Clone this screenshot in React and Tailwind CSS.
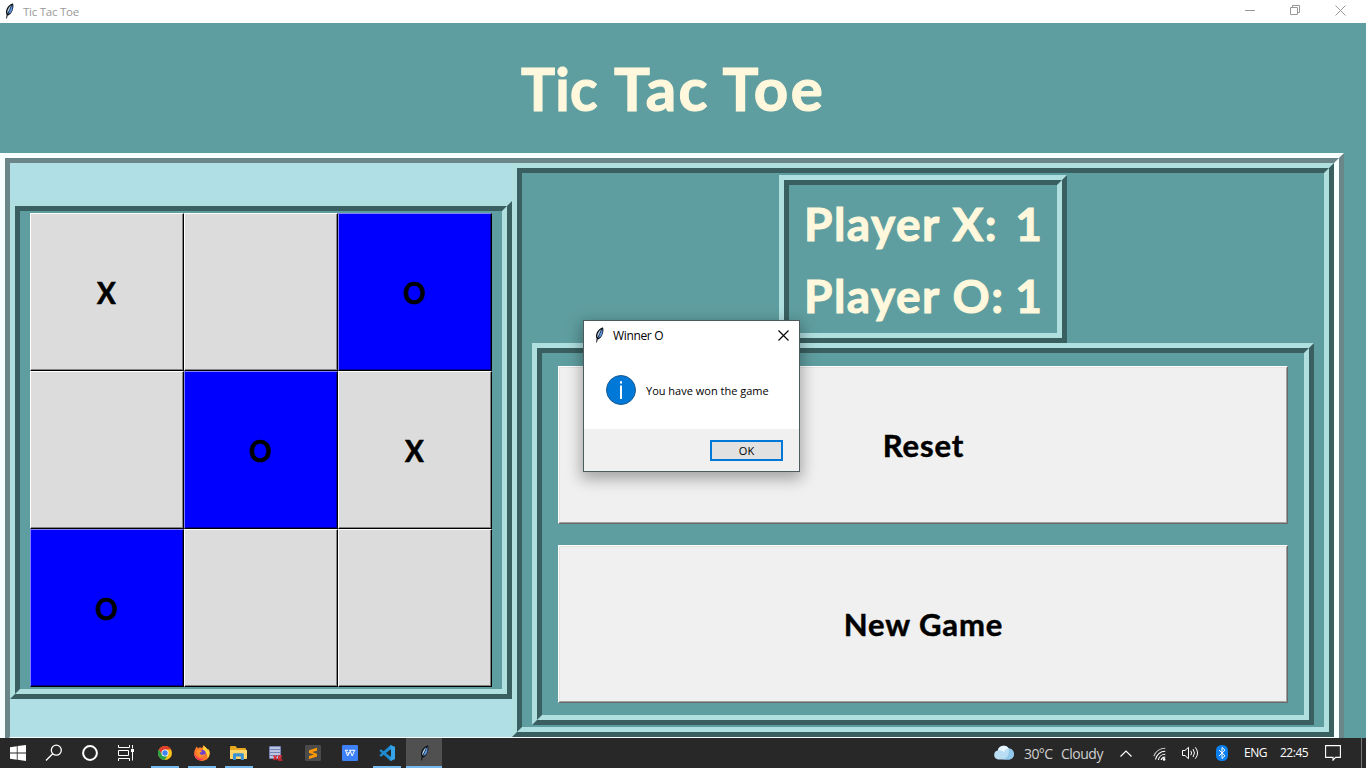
import React from "react";

const LIGHT = "border-t-[#b0dfe0] border-l-[#b0dfe0] border-b-[#3a5f60] border-r-[#3a5f60]";
const DARK = "border-b-[#b0dfe0] border-r-[#b0dfe0] border-t-[#3a5f60] border-l-[#3a5f60]";

function Ridge({ className = "", inner = "", children }) {
  return (
    <div className={`border-[5px] ${LIGHT} ${className}`}>
      <div className={`h-full border-[5px] bg-[#5f9ea0] ${DARK} ${inner}`}>{children}</div>
    </div>
  );
}

function Feather({ className }) {
  return (
    <svg viewBox="0 0 16 16" className={className}>
      <path d="M5.2 15.6 L5.6 11.5 C4.2 9 5.4 5.2 7.8 2.7 C9.2 1.2 11.5 0 12 .6 C12.9 2.7 12.4 6.6 10.7 9.2 C9.6 11 8 12.4 6.6 12.4 L6 15.6Z" fill="#0b0d12" />
      <path d="M6.4 10.6 C5.7 8.4 6.9 5.4 8.7 3.4 L10.2 2.2 L8.2 7.2Z" fill="#b5d2ec" />
      <path d="M7 11.2 L11.3 1.5 C12 5 11.2 7.8 9.9 9.4Z" fill="#5a94dc" />
    </svg>
  );
}

function Cell({ mark, won }) {
  return (
    <div className={`h-[158px] w-[154px] border ${won ? "border-t-[#7f7fff] border-l-[#7f7fff]" : "border-t-white border-l-white"} border-r-black border-b-black`}>
      <div className={`flex h-full items-center justify-center border-r border-b ${won ? "border-[#000099] bg-[#0000ff]" : "border-[#848484] bg-[#dcdcdc]"}`}>
        <span className="relative top-[1px] scale-x-[0.9] font-[Lato] text-[31px] leading-none font-bold text-black [-webkit-text-stroke:0.7px_#000]">{mark}</span>
      </div>
    </div>
  );
}

function BigButton({ children }) {
  return (
    <div className="h-[158px] border border-t-white border-l-white border-r-[#696969] border-b-[#696969]">
      <div className="flex h-full items-center justify-center border border-t-[#e3e3e3] border-l-[#e3e3e3] border-r-[#a0a0a0] border-b-[#a0a0a0] bg-[#f0f0f0] pl-px font-[Lato] text-[31px] font-bold tracking-[0.9px] text-black [-webkit-text-stroke:0.5px_#000]">
        {children}
      </div>
    </div>
  );
}

function Task({ className = "w-[37px]", running, active, children }) {
  return (
    <div className={`flex h-[30px] shrink-0 flex-col items-center ${active ? "bg-[#505050]" : ""} ${className}`}>
      <div className="flex h-7 items-center justify-center">{children}</div>
      {running && <div className={`h-[2px] bg-[#76b9ed] ${active ? "w-full" : "w-7"}`} />}
    </div>
  );
}

function Taskbar() {
  return (
    <div className="flex h-[30px] bg-[#282828] text-white">
      <Task className="w-9">
        <svg width="16" height="16" viewBox="0 0 16 16" className="relative top-px" fill="#fff"><path d="M0 2.2 6.8 1.2V7.5H0zM7.6 1.1 16 0v7.5H7.6zM0 8.4h6.8v6.3L0 13.8zM7.6 8.4H16V16l-8.4-1.2z" /></svg>
      </Task>
      <Task className="w-9">
        <svg width="18" height="18" viewBox="0 0 18 18" className="relative top-px" fill="none" stroke="#fff" strokeWidth="1.3"><circle cx="11.3" cy="6.2" r="5" /><path d="M7.7 9.8 1 16.5" /></svg>
      </Task>
      <Task className="w-9">
        <svg width="16" height="16" viewBox="0 0 16 16" className="relative top-px" fill="none" stroke="#fff" strokeWidth="2"><circle cx="8" cy="8" r="6.9" /></svg>
      </Task>
      <Task className="w-[38px]">
        <svg width="17" height="16" viewBox="0 0 17 16" className="relative -left-px top-[1px]" fill="none" stroke="#fff"><path d="M.5 0v2.5h11V0M.5 16v-2.5h11V16M.5 5.5h10v5H.5zM14.5 0v3.5M14.5 7v8.5" /><path d="M13 4h3v3h-3z" fill="#fff" stroke="none" /></svg>
      </Task>
      <Task running>
        <svg width="14" height="14" viewBox="0 0 14 14" className="relative top-px">
          <circle cx="7" cy="7" r="7" fill="#fbc116" />
          <path d="M.9 3.5A7 7 0 0 1 13.1 3.5H7L4 8.8Z" fill="#e33b2e" />
          <path d="M.9 3.5A7 7 0 0 0 6.6 14L10 8.8 4 8.8Z" fill="#26a148" />
          <circle cx="7" cy="7" r="3.5" fill="#fff" /><circle cx="7" cy="7" r="2.7" fill="#3f83ee" />
        </svg>
      </Task>
      <Task running>
        <svg width="16" height="16" viewBox="0 0 16 16" className="relative top-px">
          <path d="M1.5 3.5 2.6 1.5 4 3.2 6 2.3 8 3 9.8.2C10.5 2 13 3 14 5l.6-.8C16.4 7 16.2 11 13.5 13.8 10.5 16.7 5 16.6 2 13.5-.3 11-.5 7 1.5 3.5Z" fill="#ff7a28" />
          <path d="M9.8.2C10.5 2 13 3 14 5l.6-.8c1.5 3 1.3 6.5-1.1 9.4C14 9 11 6 9 4.2Z" fill="#ffd43c" />
          <path d="M.6 6C.3 12 5 14.5 10 13.4 7 16.8 2.4 15.2.8 11Z" fill="#f53863" />
          <circle cx="8.3" cy="8.2" r="3.3" fill="#6b42cf" />
          <path d="M3.2 5C5 4.2 7 5 8 6.5L5.5 8C6 10 9.5 10.5 11.4 8.5 11 12.5 5 13 3.5 9Z" fill="#ff9528" />
        </svg>
      </Task>
      <Task running>
        <svg width="17" height="14" viewBox="0 0 17 14" className="relative top-px">
          <path d="M0 1Q0 0 1 0H5.5L7 2H15Q16 2 16 3V13H0Z" fill="#e8a920" /><path d="M0 4H17V12Q17 13 16 13H0Z" fill="#ffd667" />
          <path d="M3 14V8.5Q3 7.2 4.3 7.2H12.5Q13.8 7.2 13.8 8.5V14H10.8V10.6H6V14Z" fill="#3a93d4" />
        </svg>
      </Task>
      <Task>
        <svg width="14" height="15" viewBox="0 0 14 15" className="relative top-px">
          <path d="M1 0H11Q12 0 12 1V12Q12 13 11 13H1Q0 13 0 12V1Q0 0 1 0Z" fill="#7683b5" />
          <path d="M1 2H11M1 5H11M1 8H11M1 11H11" stroke="#d4daf0" strokeWidth="1.5" />
          <path d="m4.5 9.5 3.5 4.5M8 9.5l-3.5 4.5M13 10H9.7v4H13.4M9.7 12H12.5" stroke="#e0252b" strokeWidth="1.3" fill="none" />
        </svg>
      </Task>
      <Task>
        <svg width="16" height="16" viewBox="0 0 16 16" className="relative top-px"><rect width="16" height="16" rx="1.2" fill="#4b4b4b" /><path d="M12 2.8V5.7L7.2 7.1 12 8.7V11.4L4 13.9V11L8.8 9.5 4 8V5.3Z" fill="#ff9800" /></svg>
      </Task>
      <Task>
        <svg width="16" height="16" viewBox="0 0 16 16" className="relative top-px"><rect width="16" height="16" rx="1.2" fill="#3e80f7" /><path d="M3 5.3H6.2M3.6 5.3 5.6 11 8.3 6.2 10.2 11 12.6 5.3M7 5.3H13.2M5.8 7 6.6 9" stroke="#fff" fill="none" /></svg>
      </Task>
      <Task running>
        <svg width="16" height="16" viewBox="0 0 16 16" className="relative top-px"><path d="m11.5 0 4.5 2v12l-4.5 2L.3 5.7 2 4.2 12 11.8V4.2L2 11.8.3 10.3Z" fill="#1e8ad0" /><path d="m11.5 0 4.5 2v12l-4.5 2Z" fill="#3aa9ee" opacity=".8" /><path d="M12 4.5v7L7.3 8Z" fill="#282828" /></svg>
      </Task>
      <Task active running className="ml-px w-9"><Feather className="relative top-px h-4 w-4" /></Task>

      <div className="ml-auto flex h-[30px] items-center">
        <svg width="22" height="16" viewBox="0 0 22 16" className="relative -top-px mr-[9px]"><path d="M5 15.5A4.6 4.6 0 0 1 4.7 6.5 6.2 6.2 0 0 1 16 4.5 5.6 5.6 0 0 1 16.5 15.5Z" fill="#b9def4" /><path d="M5 6.3A6 6 0 0 1 15.6 4.5Q12 5 11 8 8 5.7 5 6.3Z" fill="#e9f7ff" /><path d="M16 4.5A5.6 5.6 0 0 1 16.5 15.5H10Q17 13 16 4.5Z" fill="#91c7ea" /></svg>
        <span className="w-[37px] font-['Open_Sans'] text-[14px] tracking-[-0.6px] whitespace-nowrap text-[#d0d0d0]">30°C</span>
        <span className="w-[59px] font-['Open_Sans'] text-[14px] tracking-[-0.5px] text-[#d0d0d0]">Cloudy</span>
        <svg width="12" height="7" viewBox="0 0 12 7" fill="none" stroke="#fff" strokeWidth="1.2" className="mr-[21px]"><path d="m.5 6.5 5.5-5.5 5.5 5.5" /></svg>
        <svg width="13" height="14" viewBox="0 0 13 14" fill="none" stroke="#fff" strokeWidth="1.1" className="relative top-[1px] mr-[16px]"><path d="M.8 9.2A12 12 0 0 1 12.3 1.2" opacity=".75"/><path d="M2.5 12.5A9.8 9.8 0 0 1 12.3 4.3M5.3 13A7 7 0 0 1 12.3 7.3M8 13a4.5 4.5 0 0 1 4.3-3" /><circle cx="11.1" cy="12.4" r="1.3" fill="#fff" stroke="none" /></svg>
        <svg width="17" height="14" viewBox="0 0 17 14" fill="none" stroke="#fff" className="mr-[17px]"><path d="M.5 4.5H3L6.5 1.3V12.7L3 9.5H.5ZM8.8 4.8q1.5 2.2 0 4.4M11 3q3 4 0 8M13.3 1.3q4.5 5.7 0 11.4" /></svg>
        <svg width="12" height="16" viewBox="0 0 12 16" className="mr-4"><rect width="12" height="16" rx="5.5" fill="#0a80ee" /><path d="m3 5 6 5.8-3 2.7v-11l3 2.7L3 11" fill="none" stroke="#fff" /></svg>
        <span className="w-9 font-['Open_Sans'] text-[12px] tracking-[-0.5px]">ENG</span>
        <span className="w-[45px] font-['Open_Sans'] text-[12px] tracking-[-0.5px]">22:45</span>
        <svg width="16" height="16" viewBox="0 0 16 16" fill="none" stroke="#fff" strokeWidth="1.1" className="mr-[20px]"><path d="M.6.6H15.4V12.4H10.5L8 15.2V12.4H.6Z" /></svg>
        <div className="mr-1 h-full w-px bg-[#777]" />
      </div>
    </div>
  );
}

function Dialog() {
  return (
    <div className="absolute top-[320px] left-[583px] flex h-[152px] w-[217px] flex-col border border-[#4c5c5d] bg-white shadow-[0_5px_14px_2px_rgba(0,0,0,0.32)]">
      <div className="flex h-[29px] items-center pr-[10px] pl-[7px]">
        <Feather className="relative -top-px h-4 w-4" />
        <span className="ml-[6px] font-['Open_Sans'] text-[12px] tracking-[-0.35px] text-black">Winner O</span>
        <svg width="11" height="11" viewBox="0 0 11 11" stroke="#000" strokeWidth="1.1" className="ml-auto"><path d="m.5.5 10 10m0-10-10 10" /></svg>
      </div>
      <div className="flex flex-1 items-center pl-[22px]">
        <svg width="30" height="30" viewBox="0 0 30 30"><circle cx="15" cy="15" r="14.5" fill="#0078d7" stroke="#1c5a8c" /><path d="M14 6.2h2v2.3h-2zM14 10.5h2v13.5h-2z" fill="#fff" /></svg>
        <span className="ml-[10px] pt-[3px] font-['Open_Sans'] text-[11px] whitespace-nowrap text-black">You have won the game</span>
      </div>
      <div className="flex h-[42px] justify-end bg-[#f0f0f0] pt-[11px] pr-4">
        <div className="flex h-[21px] w-[73px] items-center justify-center border-2 border-[#0078d7] bg-[#e1e1e1] pt-[2px] font-['Open_Sans'] text-[11px] text-black">OK</div>
      </div>
    </div>
  );
}

export default function App() {
  const cells = ["X", "", "O", "", "O", "X", "O", "", ""];
  return (
    <div className="relative flex h-[768px] w-[1366px] flex-col overflow-hidden bg-[#5f9ea0]">
      <div className="flex h-[23px] shrink-0 items-center bg-white pr-5 pl-[2px]">
        <Feather className="relative -left-px -top-px h-4 w-4" />
        <span className="ml-[5px] font-['Open_Sans'] text-[11.5px] tracking-[-0.25px] text-[#999]">Tic Tac Toe</span>
        <svg width="102" height="11" viewBox="0 0 102 11" fill="none" stroke="#999" className="relative -top-px ml-auto"><path d="M1 5.5H11M46.5 2.5H53.5V9.5H46.5ZM48.5 2.5V.5H55.5V7.5H53.5M91.5.5l10 10m0-10-10 10" /></svg>
      </div>
      <div className="flex h-[130px] shrink-0 items-center justify-center pr-[19px]">
        <h1 className="font-[Lato] text-[60px] leading-none font-bold whitespace-nowrap text-[#fff8dc] [-webkit-text-stroke:1.2px_#fff8dc]">
          <span className="inline-block origin-left scale-x-[0.95] tracking-[0.3px]">Tic</span>{" "}
          <span className="-ml-[3px] tracking-[2.4px]">Tac</span>{" "}
          <span className="-ml-[2px] tracking-[2.6px]">Toe</span>
        </h1>
      </div>
      <div className="h-[585px] w-[1344px] shrink-0 overflow-hidden">
        <div className="h-[594px] border-[5px] border-t-[#f8ffff] border-l-[#f8ffff] border-r-[#6a8688] border-b-[#6a8688]">
          <div className="flex h-full border-[5px] border-t-[#6a8688] border-l-[#6a8688] border-r-[#f8ffff] border-b-[#f8ffff] bg-[#b0e0e6]">
            <div className="flex w-[502px] items-center">
              <Ridge className="h-[498px] w-full" inner="px-[10px] pt-[2px]">
                <div className="grid w-[462px] grid-cols-3">
                  {cells.map((m, i) => <Cell key={i} mark={m} won={m === "O"} />)}
                </div>
              </Ridge>
            </div>
            <Ridge className="w-[822px]" inner="flex flex-col items-center pt-[2px]">
              <Ridge className="h-[168px] w-[288px]" inner="px-[15px] pt-[3px]">
                {["X", "O"].map((p) => (
                  <div key={p} className="flex h-[72px] items-center justify-between font-[Lato] text-[46px] leading-none font-bold whitespace-nowrap text-[#fff8dc] [-webkit-text-stroke:1px_#fff8dc]">
                    <span className="tracking-[1.5px]">Player {p}:</span>
                    <span>1</span>
                  </div>
                ))}
              </Ridge>
              <Ridge className="h-[382px] w-[782px]" inner="flex flex-col gap-[21px] pt-[13px] pr-4 pl-4">
                <BigButton>Reset</BigButton>
                <BigButton>New Game</BigButton>
              </Ridge>
            </Ridge>
          </div>
        </div>
      </div>
      <Taskbar />
      <Dialog />
    </div>
  );
}
